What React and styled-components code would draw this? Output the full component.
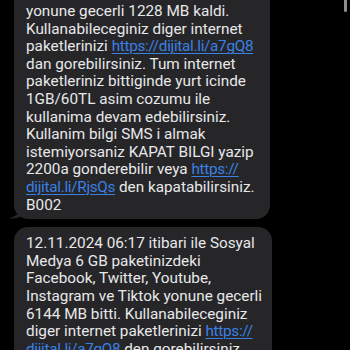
import React from "react";
import styled, { createGlobalStyle } from "styled-components";

const GlobalStyle = createGlobalStyle`
	html, body {
		margin: 0;
		padding: 0;
		background: #000;
	}
	body {
		width: 350px;
		height: 350px;
		overflow: hidden;
		font-family: Roboto, "Liberation Sans", sans-serif;
	}
`;

// each message is kept as the lines the phone wrapped it into
const messages = [
	{
		id: 1,
		cut: "top",
		tail: true,
		lines: [
			["yonune gecerli 1228 MB kaldi."],
			["Kullanabileceginiz diger internet"],
			["paketlerinizi ", { link: "https://dijital.li/a7gQ8" }],
			["dan gorebilirsiniz. Tum internet"],
			["paketleriniz bittiginde yurt icinde"],
			["1GB/60TL asim cozumu ile"],
			["kullanima devam edebilirsiniz."],
			["Kullanim bilgi SMS i almak"],
			["istemiyorsaniz KAPAT BILGI yazip"],
			["2200a gonderebilir veya ", { link: "https://" }],
			[{ link: "dijital.li/RjsQs" }, " den kapatabilirsiniz."],
			["B002"],
		],
	},
	{
		id: 2,
		cut: "bottom",
		lines: [
			["12.11.2024 06:17 itibari ile Sosyal"],
			["Medya 6 GB paketinizdeki"],
			["Facebook, Twitter, Youtube,"],
			["Instagram ve Tiktok yonune gecerli"],
			["6144 MB bitti. Kullanabileceginiz"],
			["diger internet paketlerinizi ", { link: "https://" }],
			[{ link: "dijital.li/a7gQ8" }, " den gorebilirsiniz."],
			["Tum internet paketleriniz bittiginde"],
		],
	},
];

const App = () => {
	return (
		<>
			<GlobalStyle />
			<Screen>
				<Thread>
					{messages.map((msg) => (
						<Bubble key={msg.id} $cut={msg.cut}>
							{msg.lines.map((line, i) => (
								<Line key={i}>
									{line.map((p, j) =>
										typeof p === "string" ? (
											<React.Fragment key={j}>{p}</React.Fragment>
										) : (
											<Link key={j}>{p.link}</Link>
										)
									)}
								</Line>
							))}
							{msg.tail && (
								<Tail width="14" height="12" viewBox="0 0 14 12">
									<path d="M12 0 C12 5 8 9 0 11 C5 12 10 11 14 8 Z" fill="#262628" />
								</Tail>
							)}
						</Bubble>
					))}
				</Thread>
				<Scrollbar />
			</Screen>
		</>
	);
};

const Screen = styled.div`
	position: relative;
	width: 350px;
	height: 350px;
	overflow: hidden;
	background: #000;
`;

const Thread = styled.div`
	display: flex;
	flex-direction: column;
	gap: 8px;
	padding-left: 14px;
`;

const Bubble = styled.div`
	position: relative;
	width: ${(p) => (p.$cut === "top" ? "256px" : "258px")};
	box-sizing: border-box;
	background: #262628;
	color: #e8e8ea;
	font-size: 15.3px;
	line-height: 17.6px;
	padding: ${(p) => (p.$cut === "top" ? "3px 8px 5px 12px" : "8px 8px 20px 12px")};
	border-radius: ${(p) =>
		p.$cut === "top" ? "0 0 14px 14px" : p.$cut === "bottom" ? "14px 14px 0 0" : "14px"};
`;

const Line = styled.div`
	white-space: nowrap;
`;

const Link = styled.span`
	color: #3a80e6;
	text-decoration: underline;
	text-decoration-thickness: 1px;
	text-underline-offset: 2px;
	letter-spacing: -0.3px;
`;

const Tail = styled.svg`
	position: absolute;
	left: -5px;
	bottom: 0;
`;

const Scrollbar = styled.div`
	position: absolute;
	top: 0;
	right: 3px;
	width: 3px;
	height: 12px;
	border-radius: 0 0 2px 2px;
	background: #8e8e90;
`;

export default App;
